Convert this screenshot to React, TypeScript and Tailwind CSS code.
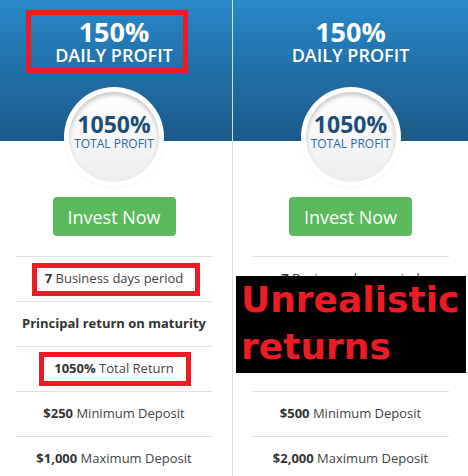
type Row = { strong?: string; text: string; bold?: boolean };

type Plan = {
  daily: string;
  total: string;
  rows: Row[];
};

const plans: Plan[] = [
  {
    daily: "150%",
    total: "1050%",
    rows: [
      { strong: "7", text: "Business days period" },
      { text: "Principal return on maturity", bold: true },
      { strong: "1050%", text: "Total Return" },
      { strong: "$250", text: "Minimum Deposit" },
      { strong: "$1,000", text: "Maximum Deposit" },
    ],
  },
  {
    daily: "150%",
    total: "1050%",
    rows: [
      { strong: "7", text: "Business days period" },
      { text: "Principal return on maturity", bold: true },
      { strong: "1050%", text: "Total Return" },
      { strong: "$500", text: "Minimum Deposit" },
      { strong: "$2,000", text: "Maximum Deposit" },
    ],
  },
];

function PlanColumn({ plan, inset }: { plan: Plan; inset?: boolean }) {
  return (
    <div className="flex flex-col">
      {/* header */}
      <div
        className={`h-[141px] bg-gradient-to-b from-[#2888c9] to-[#1b5989] flex flex-col items-center pt-[18px] text-white ${
          inset ? "pr-[4px]" : ""
        }`}
      >
        <div className="text-[27px] font-bold leading-[28px]">{plan.daily}</div>
        <div className="text-[18px] font-semibold leading-[18px]">DAILY PROFIT</div>
      </div>

      <div className={`flex flex-col items-center ${inset ? "pr-[4px]" : ""}`}>
        {/* total profit badge */}
        <div className="-mt-[54px] w-[100px] h-[100px] rounded-full bg-white p-[5px] shadow-[0_1px_2px_rgba(0,0,0,0.05)]">
          <div className="w-full h-full rounded-full bg-gradient-to-b from-white via-[#f7f7f7] to-[#ececec] shadow-[inset_0_3px_4px_rgba(0,0,0,0.22)] flex flex-col items-center pt-[19px]">
            <div className="text-[23px] font-bold leading-[26px] text-[#1d4e76]">{plan.total}</div>
            <div className="text-[12px] leading-[14px] text-[#2a6aa0]">TOTAL PROFIT</div>
          </div>
        </div>

        <button className="mt-[10px] h-[39px] w-[123px] rounded-[4px] bg-[#5cb85c] text-white text-[18px] leading-none">
          Invest Now
        </button>

        <div className="mt-[20px] w-[196px]">
          {plan.rows.map((r, i) => (
            <div
              key={i}
              className="h-[45px] border-t border-[#dddddd] flex items-center justify-center text-[13px] text-[#444] whitespace-nowrap"
            >
              {r.bold ? (
                <span className="font-bold text-[#333]">{r.text}</span>
              ) : (
                <span>
                  <span className="font-bold text-[#333]">{r.strong}</span> {r.text}
                </span>
              )}
            </div>
          ))}
        </div>
      </div>
    </div>
  );
}

export default function App() {
  return (
    <div className="relative w-[468px] h-[476px] overflow-hidden bg-white flex font-['Open_Sans',sans-serif]">
      <div className="w-[232px]">
        <PlanColumn plan={plans[0]} inset />
      </div>
      <div className="w-[1px] bg-[#dcdcdc]" />
      <div className="flex-1">
        <PlanColumn plan={plans[1]} />
      </div>

      {/* annotations */}
      <div className="absolute left-[26px] top-[10px] w-[162px] h-[63px] border-[5px] border-[#ed1c24]" />
      <div className="absolute left-[32px] top-[263px] w-[168px] h-[33px] border-[5px] border-[#ed1c24]" />
      <div className="absolute left-[39px] top-[352px] w-[152px] h-[34px] border-[5px] border-[#ed1c24]" />
      <div className="absolute left-[236px] top-[276px] w-[230px] h-[97px] bg-black pl-[5px] font-['DejaVu_Sans',sans-serif] font-bold text-[36px] leading-[47px] text-[#ed1c24]">
        <div>Unrealistic</div>
        <div>returns</div>
      </div>
    </div>
  );
}
